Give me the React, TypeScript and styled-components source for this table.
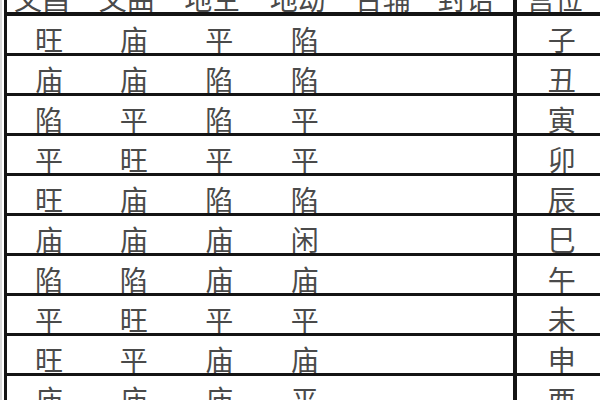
import styled, { createGlobalStyle } from "styled-components";

const GlobalStyle = createGlobalStyle`
    html, body {
        margin: 0;
        padding: 0;
        background: #fff;
        overflow: hidden;
    }
`;

const Page = styled.div`
    width: 600px;
    height: 400px;
    overflow: hidden;
    border-left: 2px solid #d9d9d9;
    padding-left: 2px;
    box-sizing: border-box;
`;

const Table = styled.table`
    margin-top: -25px;
    border-collapse: collapse;
    table-layout: fixed;
    width: 602px;
    border-left: 3px solid #141414;
    font-family: "Noto Sans CJK SC", "Noto Sans CJK TC", sans-serif;
    color: #4a4a4a;
`;

const Row = styled.tr<{ head?: boolean }>`
    border-bottom: ${({ head }) => (head ? 4 : 3)}px solid #141414;
`;

const Cell = styled.td<{ palace?: boolean; head?: boolean }>`
    height: ${({ head }) => (head ? 38 : 39)}px;
    padding: 9px ${({ head }) => (head ? 14 : 0)}px 0 0;
    box-sizing: border-box;
    vertical-align: top;
    text-align: center;
    font-size: 28px;
    line-height: 28px;
    white-space: nowrap;
    overflow: hidden;
    border-left: ${({ palace }) => (palace ? "4px solid #141414" : "none")};
`;

const headers = ["文昌", "文曲", "地空", "地劫", "台辅", "封诰", "宫位"];

const rows: string[][] = [
    ["旺", "庙", "平", "陷", "", "", "子"],
    ["庙", "庙", "陷", "陷", "", "", "丑"],
    ["陷", "平", "陷", "平", "", "", "寅"],
    ["平", "旺", "平", "平", "", "", "卯"],
    ["旺", "庙", "陷", "陷", "", "", "辰"],
    ["庙", "庙", "庙", "闲", "", "", "巳"],
    ["陷", "陷", "庙", "庙", "", "", "午"],
    ["平", "旺", "平", "平", "", "", "未"],
    ["旺", "平", "庙", "庙", "", "", "申"],
    ["庙", "庙", "庙", "平", "", "", "酉"]
];

const widths = [84, 84, 84, 84, 83, 82, 89];

export default function App() {
    return (
        <>
            <GlobalStyle />
            <Page>
                <Table>
                    <colgroup>
                        {widths.map((w, i) => (
                            <col key={i} style={{ width: w }} />
                        ))}
                    </colgroup>
                    <thead>
                        <Row head>
                            {headers.map((h, i) => (
                                <Cell key={h} head palace={i === 6}>
                                    {h}
                                </Cell>
                            ))}
                        </Row>
                    </thead>
                    <tbody>
                        {rows.map((r, ri) => (
                            <Row key={ri}>
                                {r.map((c, ci) => (
                                    <Cell key={ci} palace={ci === 6}>
                                        {c}
                                    </Cell>
                                ))}
                            </Row>
                        ))}
                    </tbody>
                </Table>
            </Page>
        </>
    );
}
